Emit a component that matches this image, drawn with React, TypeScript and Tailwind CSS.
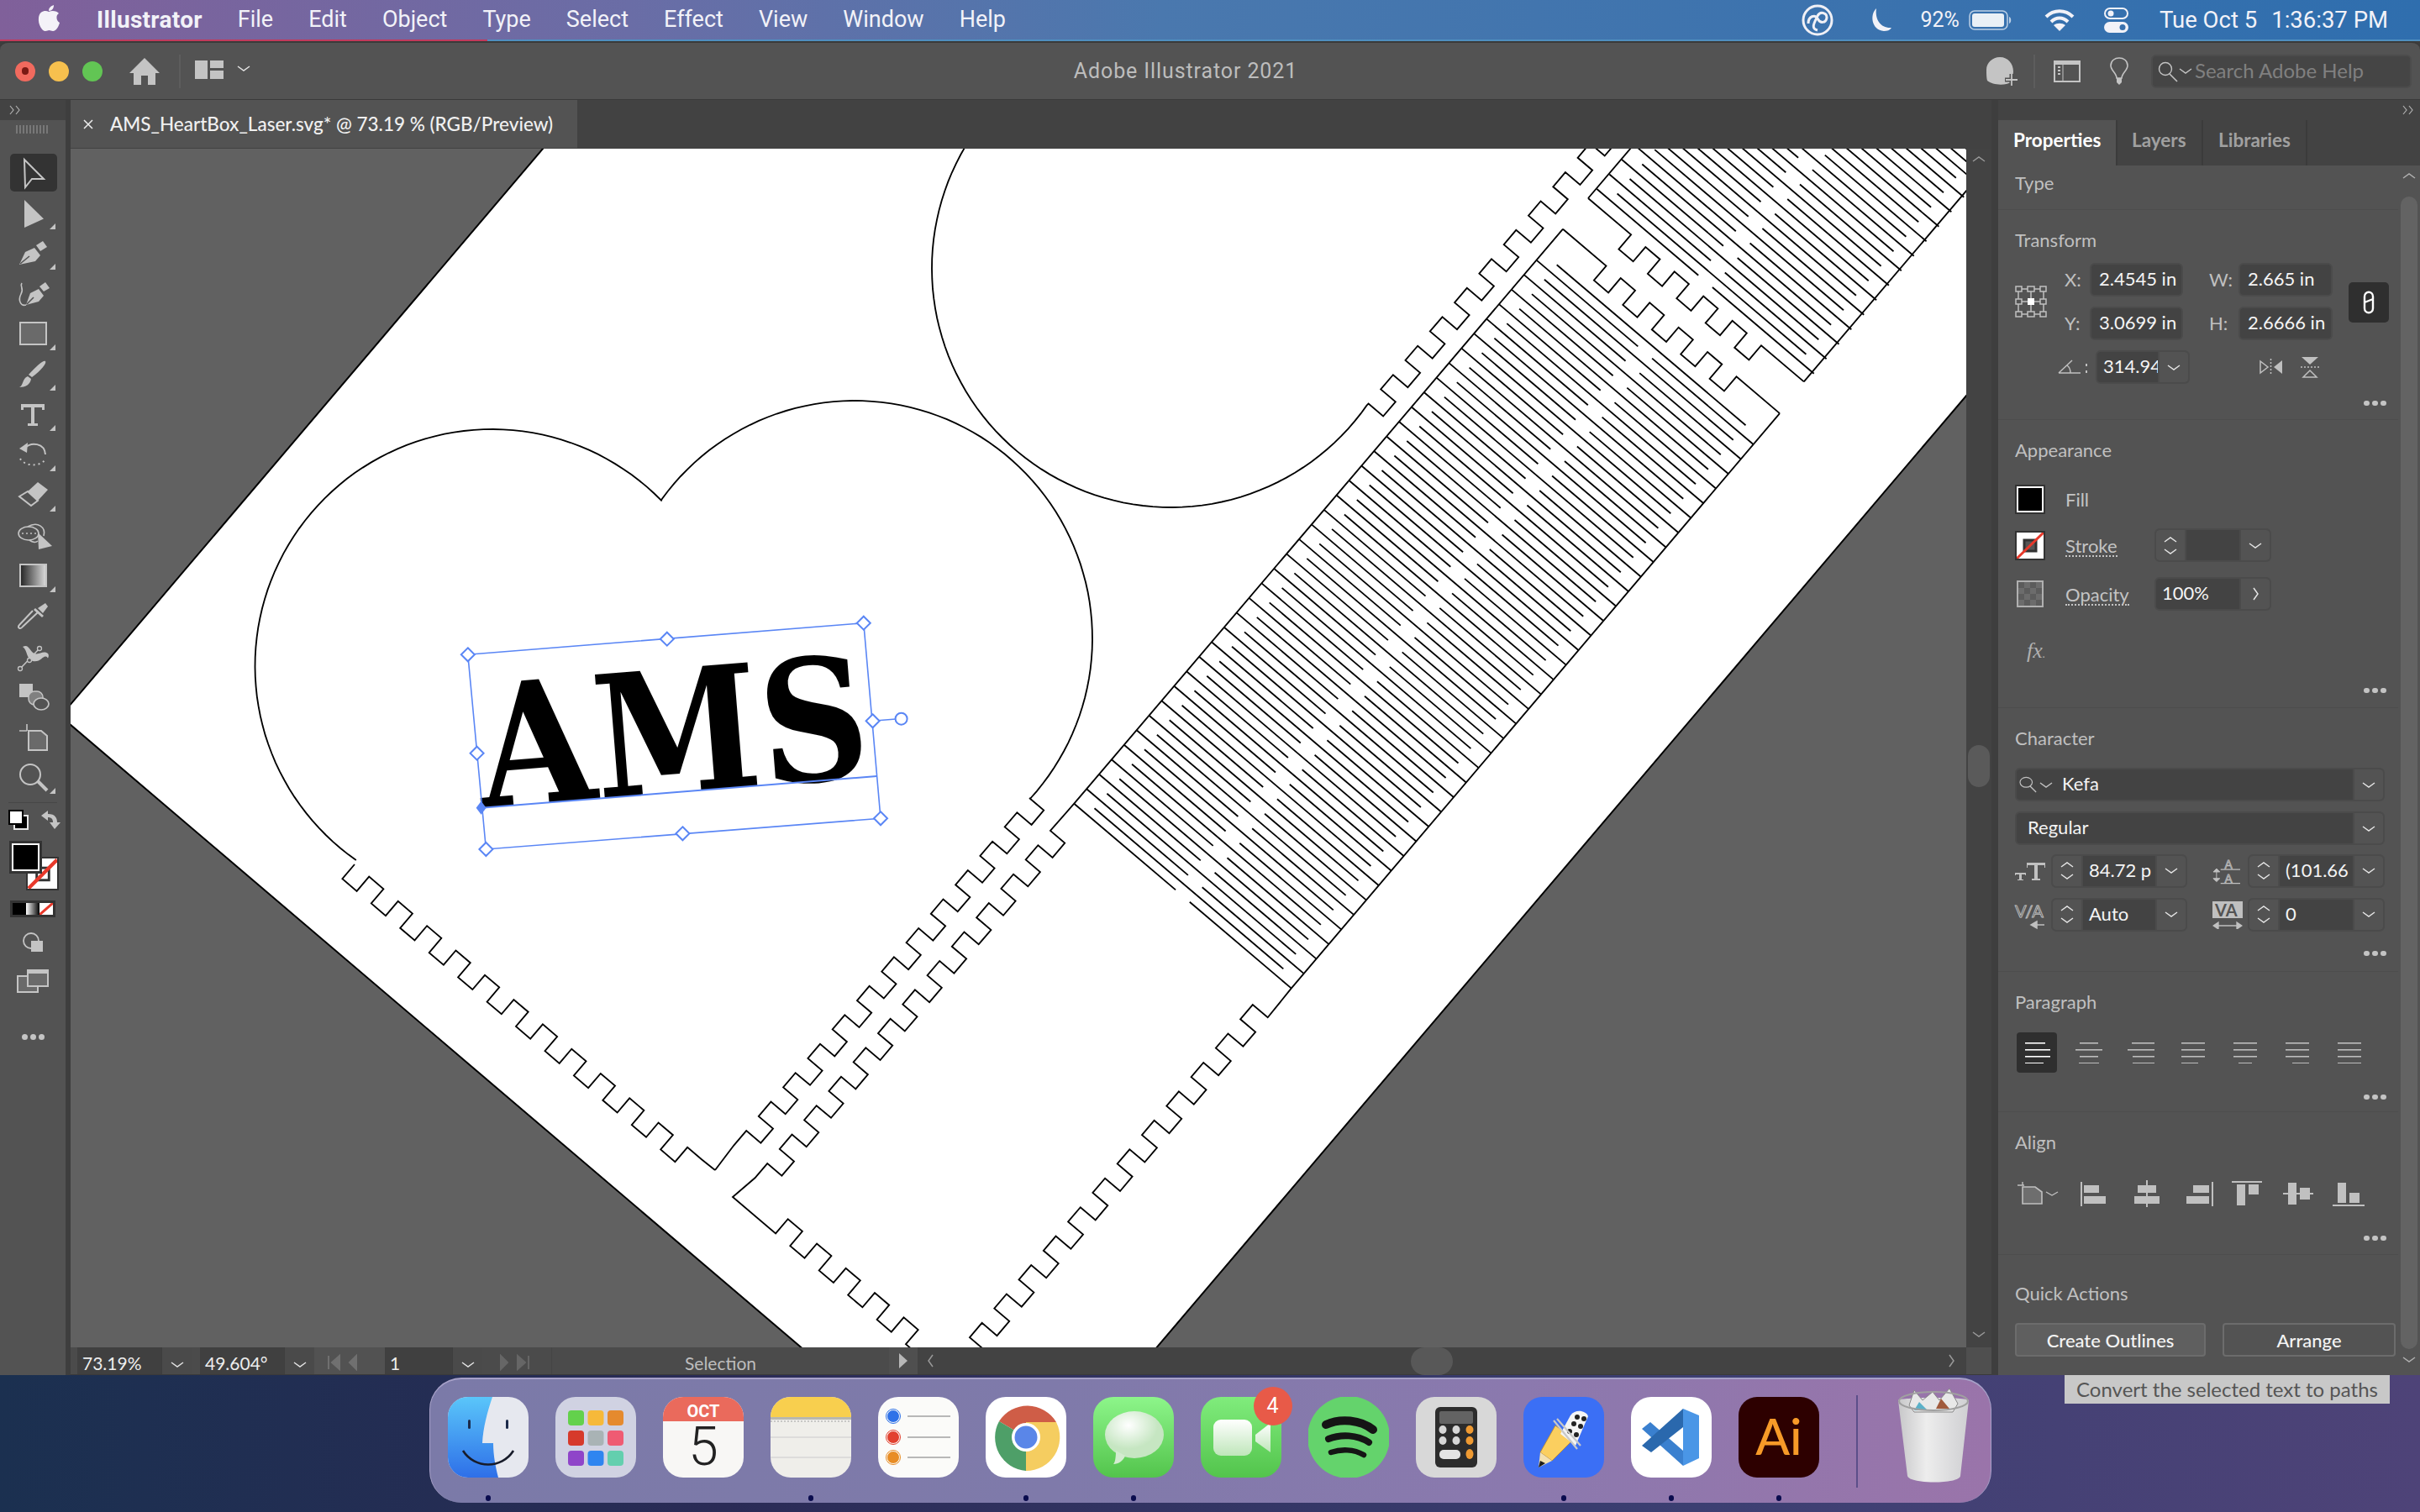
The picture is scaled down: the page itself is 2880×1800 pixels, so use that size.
import React from 'react';

type Pt = [number, number];

const U: Pt = [0.648, -0.762];
const V: Pt = [0.762, 0.648];
const T = 22.6;
const ICON = '#c4c4c4';

const add = (p: Pt, d: Pt, n: number): Pt => [p[0] + d[0] * n, p[1] + d[1] * n];

// walks a start point through [direction, length] moves
function walk(start: Pt, moves: [Pt, number][]): Pt[] {
  const pts: Pt[] = [start];
  moves.forEach(([d, n]) => pts.push(add(pts[pts.length - 1], d, n)));
  return pts;
}

function arc(c: Pt, r: number, from: number, to: number): Pt[] {
  const pts: Pt[] = [];
  const n = 80;
  for (let i = 0; i <= n; i++) {
    const a = ((from + ((to - from) * i) / n) * Math.PI) / 180;
    pts.push([c[0] + Math.cos(a) * r, c[1] + Math.sin(a) * r]);
  }
  return pts;
}

const rep = (n: number, m: [Pt, number][]) => Array.from({ length: n }).flatMap(() => m);
const neg = (d: Pt): Pt => [-d[0], -d[1]];
const str = (pts: Pt[]) => pts.map(p => `${p[0].toFixed(1)},${p[1].toFixed(1)}`).join(' ');

function Line({ pts }: { pts: Pt[] }) {
  return <polyline points={str(pts)} fill="none" stroke="#000" strokeWidth={1.85} strokeLinejoin="miter" />;
}

// living hinge: attached lines with a middle gap, floating lines between them
function Hinge({ start, count }: { start: Pt; count: number }) {
  const len = 339;
  const out: React.ReactNode[] = [];
  for (let k = 0; k < count; k++) {
    const a = add(start, U, k * 22.95);
    const f = add(add(a, U, 11.47), V, 22);
    out.push(<Line key={`a${k}`} pts={[a, add(a, V, len / 2 - 11)]} />);
    out.push(<Line key={`b${k}`} pts={[add(a, V, len / 2 + 11), add(a, V, len)]} />);
    out.push(<Line key={`f${k}`} pts={[f, add(f, V, len - 44)]} />);
  }
  return <>{out}</>;
}

function Handle({ x, y }: { x: number; y: number }) {
  return (
    <polygon
      points={`${x},${y - 8} ${x + 8},${y} ${x},${y + 8} ${x - 8},${y}`}
      fill="#fff"
      stroke="#5a86f5"
      strokeWidth={2}
    />
  );
}

function Artwork() {
  const heartL = arc([585.5, 793], 282, 125, 315.6);
  const heartR = arc([1017, 760], 283, 216, 402.3);
  const tip: Pt = [851, 1393];
  const heartLeftTeeth = [...walk([422, 1029], rep(12, [[neg(U), T], [V, T], [U, T], [V, T]])), tip];
  const heartRightTeeth = walk([1225, 950], rep(12, [[V, T], [neg(U), T], [neg(V), T], [neg(U), T]]));

  const stripA = [
    ...arc([1393.5, 319.5], 284.5, 225, 35),
    ...walk([1628.6, 480.6], rep(10, [[V, 23], [U, T], [neg(V), 23], [U, T]])),
  ];

  // main box of the lid, bottom corner to top corner and back down the long side
  const boxLeftTeeth = walk([1250, 989], rep(12, [[V, T], [neg(U), T], [neg(V), T], [neg(U), T]]));
  const corner: Pt = [872, 1425];
  const boxNear = walk(add(corner, V, 67), rep(5, [[U, T], [V, T], [neg(U), T], [V, T]]));
  const boxTop = walk([1860, 272.7], [
    [V, 67.6],
    ...rep(4, [[neg(U), T], [V, T], [U, T], [V, T]]),
    [neg(U), T],
    [V, T],
    [U, T],
    [V, 67.6],
  ]);
  const boxRight = walk(boxTop[boxTop.length - 1], [[neg(U), 897 - 0]]);
  const boxRightTeeth = walk([1508.7, 1211.3], rep(12, [[neg(V), 23.5], [neg(U), T], [V, 23.5], [neg(U), T]]));

  const upper = walk([1890, 236], [
    [V, 67],
    ...rep(4, [[neg(U), T], [V, T], [U, T], [V, T]]),
    [neg(U), T],
    [V, T],
    [U, T],
    [V, 66.6],
  ]);

  return (
    <svg viewBox="84 177 2256 1427" className="block w-full h-full">
      <polygon
        points="72,852.6 720,90 2500,90 2500,283 1295,1700 1066,1700"
        fill="#fff"
        stroke="#000"
        strokeWidth={2}
      />
      <Line pts={stripA} />
      <Line pts={[...heartL, ...heartR]} />
      <Line pts={heartLeftTeeth} />
      <Line pts={[tip, ...heartRightTeeth.slice().reverse()]} />
      <Line pts={[[1860, 272.7], [1278.3, 956.7], ...boxLeftTeeth, corner, add(corner, V, 67), ...boxNear]} />
      <Line pts={boxTop} />
      <Line pts={[boxRight[0], [1536.7, 1176.7], [1508.7, 1211.3], ...boxRightTeeth]} />
      <Hinge start={[1278.3, 956.7]} count={38} />
      <Line pts={[add([1890, 236], U, 120), [1890, 236]]} />
      <Line pts={upper} />
      <Line pts={[upper[upper.length - 1], add(upper[upper.length - 1], U, 500)]} />
      <Hinge start={[1900.4, 225]} count={20} />

      <text
        transform="translate(574 961.7) rotate(-4.6)"
        className="font-['DejaVu_Serif',serif] font-bold"
        fontSize={202}
        textLength={466}
        lengthAdjust="spacingAndGlyphs"
        fill="#000"
      >
        AMS
      </text>
      <polygon
        points="556.8,779.3 1027.8,741.7 1048,974.3 578.4,1011"
        fill="none"
        stroke="#5a86f5"
        strokeWidth={1.6}
      />
      <line x1={572.6} y1={961.7} x2={1043.6} y2={924} stroke="#5a86f5" strokeWidth={2} />
      <line x1={1038.6} y1={858.3} x2={1066} y2={856} stroke="#5a86f5" strokeWidth={1.6} />
      <circle cx={1072.6} cy={855.7} r={7} fill="#fff" stroke="#5a86f5" strokeWidth={2} />
      <Handle x={556.8} y={779.3} />
      <Handle x={793.8} y={760.7} />
      <Handle x={1027.8} y={741.7} />
      <Handle x={567.6} y={896.7} />
      <Handle x={1038.6} y={858.3} />
      <Handle x={578.4} y={1011} />
      <Handle x={812.4} y={992.3} />
      <Handle x={1048} y={974.3} />
      <polygon points="572.6,953.7 578.6,961.7 572.6,969.7 566.6,961.7" fill="#5a86f5" />
    </svg>
  );
}

function Chev({ dir = 'down', className = '', color = '#e4e4e4' }: { dir?: 'down' | 'up' | 'left' | 'right'; className?: string; color?: string }) {
  const d = { down: 'M1 1 L8 6 L15 1', up: 'M1 6 L8 1 L15 6', left: 'M6 1 L1 8 L6 15', right: 'M1 1 L6 8 L1 15' }[dir];
  const vert = dir === 'down' || dir === 'up';
  return (
    <svg viewBox={vert ? '0 0 16 7' : '0 0 7 16'} className={`shrink-0 ${vert ? 'w-[16px] h-[7px]' : 'w-[7px] h-[16px]'} ${className}`}>
      <path d={d} fill="none" stroke={color} strokeWidth={1.5} />
    </svg>
  );
}

function DoubleChev({ className = '' }: { className?: string }) {
  return (
    <svg viewBox="0 0 16 12" className={`w-[16px] h-[12px] ${className}`}>
      <path d="M2 1 L6 6 L2 11 M9 1 L13 6 L9 11" fill="none" stroke="#b0b0b0" strokeWidth={1.2} />
    </svg>
  );
}

function MenuBar() {
  const items = ['File', 'Edit', 'Object', 'Type', 'Select', 'Effect', 'View', 'Window', 'Help'];
  return (
    <div className="flex items-center h-[47px] pl-[44px] pr-[38px] bg-[linear-gradient(90deg,#80609a,#6a6da6_26%,#4a78ae_48%,#2f6eae_100%)] text-[#f2f2f8] font-['Roboto',sans-serif] text-[27px]">
      <svg viewBox="0 0 28 32" className="w-[28px] h-[32px] mb-[3px]">
        <path
          d="M14 8 C10 6 3 7 2 15 C1 23 6 31 10 31 C12 31 13 30 14.5 30 C16 30 17 31 19 31 C23 31 26 25 27 21 C23 19 22 12 26 10 C24 7 18 6 14 8 Z M14 7 C14 3 17 1 20 0 C20 4 18 7 14 7 Z"
          fill="#f4f2f8"
        />
      </svg>
      <span className="ml-[43px] font-bold text-[28px] tracking-[0.3px]">Illustrator</span>
      <div className="flex ml-[42px] gap-[42px]">
        {items.map(m => (
          <span key={m}>{m}</span>
        ))}
      </div>
      <div className="ml-auto flex items-center">
        <svg viewBox="0 0 40 40" className="w-[40px] h-[40px]">
          <circle cx="20" cy="20" r="17" fill="none" stroke="#f0f0f6" strokeWidth="3" />
          <path d="M9 24 C9 15 17 13 20 18 C23 24 30 24 31 17 C31 11 23 9 20 15 C17 22 11 30 20 32" fill="none" stroke="#f0f0f6" strokeWidth="3" />
        </svg>
        <svg viewBox="0 0 28 30" className="ml-[41px] w-[28px] h-[30px]">
          <path d="M9 1 C1 8 3 27 18 28 C22 28 25 27 27 24 C15 25 7 15 9 1 Z" fill="#f2f2f8" />
        </svg>
        <span className="ml-[34px] text-[25px]">92%</span>
        <svg viewBox="0 0 52 24" className="ml-[11px] w-[52px] h-[24px]">
          <rect x="1" y="1" width="45" height="22" rx="6" fill="none" stroke="#bcd0e6" strokeWidth="1.5" />
          <rect x="4" y="4" width="38" height="16" rx="3" fill="#eaf0f6" />
          <path d="M48 8 C51 9 51 15 48 16 Z" fill="#bcd0e6" />
        </svg>
        <svg viewBox="0 0 36 26" className="ml-[38px] w-[36px] h-[26px]">
          <path d="M2 9 C11 0 25 0 34 9 M8 15 C14 9 22 9 28 15" fill="none" stroke="#f2f2f8" strokeWidth="4" />
          <path d="M18 26 L11 19 C15 16 21 16 25 19 Z" fill="#f2f2f8" />
        </svg>
        <svg viewBox="0 0 30 30" className="ml-[35px] w-[30px] h-[30px]">
          <rect x="1" y="1" width="27" height="12" rx="6" fill="none" stroke="#f2f2f8" strokeWidth="2" />
          <circle cx="8" cy="7" r="3.5" fill="#f2f2f8" />
          <rect x="0" y="17" width="29" height="13" rx="6.5" fill="#f2f2f8" />
          <circle cx="22" cy="23.5" r="3.5" fill="#3a71ad" />
        </svg>
        <span className="ml-[36px] text-[27.5px]">Tue Oct 5</span>
        <span className="ml-[17px] text-[27.5px]">1:36:37 PM</span>
      </div>
    </div>
  );
}

function TitleBar() {
  return (
    <div className="relative flex items-center h-[69px] bg-[#535353] rounded-t-[10px] border-t-2 border-[#3a3a3a] pl-[18px] pr-[10px]">
      <span className="flex items-center justify-center w-[24px] h-[24px] rounded-full bg-[#f16a5e]">
        <span className="w-[8px] h-[9px] rounded-full bg-[#7a1a14]" />
      </span>
      <span className="ml-[16px] w-[24px] h-[24px] rounded-full bg-[#f6c04e]" />
      <span className="ml-[16px] w-[24px] h-[24px] rounded-full bg-[#62c554]" />
      <svg viewBox="0 0 36 32" className="ml-[32px] w-[36px] h-[32px]">
        <path d="M18 0 L36 18 L31 18 V32 H22 V21 H14 V32 H5 V18 H0 Z" fill={ICON} />
      </svg>
      <span className="ml-[23px] w-[2px] h-[40px] bg-[#5d5d5d]" />
      <svg viewBox="0 0 34 22" className="ml-[17px] w-[34px] h-[22px] mb-[4px]">
        <path d="M0 0 H15 V22 H0 Z M18 0 H34 V9 H18 Z M18 12 H34 V22 H18 Z" fill={ICON} />
      </svg>
      <Chev className="ml-[16px] mb-[6px]" />
      <span className="absolute left-0 right-[58px] text-center text-[#bdbdbd] text-[25px] tracking-[0.9px] font-['Roboto',sans-serif] pointer-events-none">Adobe Illustrator 2021</span>
      <div className="ml-auto flex items-center">
        <svg viewBox="0 0 38 34" className="w-[38px] h-[34px]">
          <path d="M16 0 C26 0 32 8 32 17 C32 23 29 25 26 26 L31 29 C24 34 8 34 1 28 C0 25 0 20 0 15 C0 7 7 0 16 0 Z" fill={ICON} />
          <path d="M22 27 H37 M30 20 V34" stroke="#535353" strokeWidth="5" />
          <path d="M23 27 H37 M30 20 V34" stroke={ICON} strokeWidth="1.8" />
        </svg>
        <span className="ml-[18px] w-[2px] h-[40px] bg-[#5d5d5d]" />
        <svg viewBox="0 0 32 26" className="ml-[22px] w-[32px] h-[26px]">
          <rect x="1" y="1" width="30" height="24" fill="none" stroke={ICON} strokeWidth="2" />
          <rect x="1" y="1" width="30" height="4" fill={ICON} />
          <path d="M5 8 H8 M5 12 H8 M5 16 H8" stroke={ICON} strokeWidth="2" />
          <path d="M11 5 V25" stroke={ICON} strokeWidth="1" />
        </svg>
        <svg viewBox="0 0 22 34" className="ml-[35px] w-[22px] h-[34px]">
          <path d="M8 25 C8 19 1 16 1 10 C1 4 6 1 11 1 C16 1 21 4 21 10 C21 16 14 19 14 25 Z" fill="none" stroke={ICON} strokeWidth="1.6" />
          <path d="M8 25 H14 V30 L11 33 L8 30 Z" fill={ICON} />
        </svg>
        <div className="ml-[27px] flex items-center w-[310px] h-[40px] bg-[#454545] border-2 border-[#4c4c4c] rounded-[6px] pl-[6px]">
          <svg viewBox="0 0 24 26" className="w-[24px] h-[26px]">
            <circle cx="9" cy="10" r="7.5" fill="none" stroke={ICON} strokeWidth="1.4" />
            <path d="M14 16 L23 25" stroke={ICON} strokeWidth="1.6" />
          </svg>
          <Chev className="ml-[1px] w-[14px]" color={ICON} />
          <span className="ml-[3px] text-[#808080] text-[24px] leading-[30px] mb-[2px]">Search Adobe Help</span>
        </div>
      </div>
    </div>
  );
}

function Corner() {
  return <span className="absolute right-[12px] bottom-[5px] w-[7px] h-[7px] bg-[#c4c4c4] [clip-path:polygon(100%_0,100%_100%,0_100%)]" />;
}

const toolIcons: { el: React.ReactNode; corner: boolean }[] = [
  { corner: false, el: <path d="M8 2 L31 25 H17 L9 35 Z" fill="none" stroke={ICON} strokeWidth="2" /> },
  { corner: true, el: <path d="M8 2 L31 24.5 L8 35 Z" fill={ICON} /> },
  {
    corner: true,
    el: (
      <>
        <path d="M2 31 L9 16 L20 11 L27 20 L21 27 Z" fill={ICON} />
        <path d="M22 8 L30 3 L35 10 L27 15 Z" fill={ICON} />
        <path d="M3 30 L14 21" stroke="#535353" strokeWidth="1.6" />
      </>
    ),
  },
  {
    corner: false,
    el: (
      <>
        <path d="M10 31 L15 17 L25 12 L31 20 L25 27 Z" fill={ICON} />
        <path d="M26 9 L33 4 L38 11 L31 15 Z" fill={ICON} />
        <path d="M11 30 L19 22" stroke="#535353" strokeWidth="1.6" />
        <path d="M5 5 C2 9 8 11 4 18 C0 26 4 33 10 31" fill="none" stroke={ICON} strokeWidth="1.6" />
      </>
    ),
  },
  { corner: true, el: <rect x="3" y="4" width="31" height="26" fill="#6a6a6a" stroke={ICON} strokeWidth="2" /> },
  {
    corner: true,
    el: (
      <>
        <path d="M33 2 C35 4 28 13 17 21 L13 18 C22 8 31 0 33 2 Z" fill={ICON} />
        <path d="M2 33 C7 31 5 23 12 20 L16 23 C15 30 9 33 2 33 Z" fill={ICON} />
      </>
    ),
  },
  {
    corner: true,
    el: (
      <>
        <rect x="4" y="5" width="28" height="4" fill={ICON} />
        <rect x="4" y="5" width="3" height="7" fill={ICON} />
        <rect x="29" y="5" width="3" height="7" fill={ICON} />
        <rect x="16" y="5" width="4" height="24" fill={ICON} />
        <rect x="12" y="28" width="12" height="3" fill={ICON} />
      </>
    ),
  },
  {
    corner: true,
    el: (
      <>
        <path d="M9 9 C16 2 32 3 33 17" fill="none" stroke={ICON} strokeWidth="2" />
        <path d="M2 10 L12 3 L11 15 Z" fill={ICON} />
        <path d="M3 22 C8 31 26 32 32 24" fill="none" stroke={ICON} strokeWidth="2" strokeDasharray="2 4" />
      </>
    ),
  },
  {
    corner: true,
    el: (
      <>
        <path d="M12 13 L24 2 L36 11 L24 24 Z" fill={ICON} />
        <path d="M2 19 L12 13 L24 24 L16 30 Z" fill="none" stroke={ICON} strokeWidth="2" />
      </>
    ),
  },
  {
    corner: false,
    el: (
      <>
        <ellipse cx="13" cy="15" rx="12" ry="8" fill="none" stroke={ICON} strokeWidth="1.6" />
        <path d="M12 7 C24 0 34 8 31 18" fill="none" stroke={ICON} strokeWidth="1.6" />
        <path d="M14 23 C18 26 22 26 24 24" fill="none" stroke={ICON} strokeWidth="1.6" />
        <path d="M5 15 H22" stroke={ICON} strokeWidth="1.6" strokeDasharray="2 3" />
        <path d="M24 14 L41 30 L25 34 Z" fill={ICON} />
      </>
    ),
  },
  {
    corner: true,
    el: (
      <>
        <defs>
          <linearGradient id="toolGrad">
            <stop offset="0" stopColor="#222" />
            <stop offset="1" stopColor="#ddd" />
          </linearGradient>
        </defs>
        <rect x="3" y="4" width="31" height="26" fill="url(#toolGrad)" stroke={ICON} strokeWidth="2" />
      </>
    ),
  },
  {
    corner: false,
    el: (
      <>
        <path d="M24 8 L33 2 L36 6 L30 14 Z" fill={ICON} />
        <path d="M20 9 L30 18" stroke={ICON} strokeWidth="3" />
        <path d="M24 13 L6 30 C3 34 -1 31 2 28 L18 11" fill="none" stroke={ICON} strokeWidth="2" />
      </>
    ),
  },
  {
    corner: false,
    el: (
      <>
        <path d="M6 6 C14 2 14 12 20 14 C26 16 30 10 36 14 C38 16 36 22 35 18 C30 15 28 25 18 23 C10 21 12 10 6 6 Z" fill={ICON} />
        <path d="M3 32 L26 8" stroke={ICON} strokeWidth="1.6" />
        <circle cx="3" cy="32" r="2.5" fill="#535353" stroke={ICON} strokeWidth="1.3" />
        <circle cx="14" cy="22" r="2.5" fill="#535353" stroke={ICON} strokeWidth="1.3" />
        <circle cx="26" cy="8" r="2.5" fill="#535353" stroke={ICON} strokeWidth="1.3" />
      </>
    ),
  },
  {
    corner: false,
    el: (
      <>
        <rect x="2" y="2" width="16" height="16" fill={ICON} />
        <rect x="13" y="11" width="17" height="16" rx="7" fill="#808080" stroke={ICON} strokeWidth="1.5" />
        <ellipse cx="28" cy="26" rx="9" ry="7" fill="#535353" stroke={ICON} strokeWidth="1.7" />
      </>
    ),
  },
  {
    corner: false,
    el: (
      <>
        <path d="M2 10 H11 M11 2 V10" stroke={ICON} strokeWidth="1.6" />
        <path d="M13 10 H28 L35 16 V33 H13 Z" fill="#6a6a6a" stroke={ICON} strokeWidth="2" />
      </>
    ),
  },
  {
    corner: true,
    el: (
      <>
        <circle cx="15" cy="14" r="12" fill="none" stroke={ICON} strokeWidth="2" />
        <path d="M24 22 L35 33" stroke={ICON} strokeWidth="4" />
      </>
    ),
  },
];

function Toolbar() {
  return (
    <div className="flex flex-col w-[78px] bg-[#535353] shrink-0">
      <div className="flex items-center h-[24px] bg-[#434343] pl-[10px]">
        <DoubleChev />
      </div>
      <div className="flex items-center justify-center h-[22px]">
        <svg viewBox="0 0 40 10" className="w-[40px] h-[10px]">
          <path d="M1 0 V10 M5 0 V10 M9 0 V10 M13 0 V10 M17 0 V10 M21 0 V10 M25 0 V10 M29 0 V10 M33 0 V10 M37 0 V10" stroke="#888" strokeWidth="1.4" />
        </svg>
      </div>
      <div className="flex flex-col pt-[17px]">
        {toolIcons.map((t, i) => (
          <div key={i} className="relative flex items-center justify-center h-[48px]">
            {i === 0 && <span className="absolute left-[12px] right-[10px] top-[1px] h-[45px] bg-[#333] rounded-[5px]" />}
            <svg viewBox="0 0 36 36" className="relative w-[36px] h-[36px] overflow-visible">
              {t.el}
            </svg>
            {t.corner && <Corner />}
          </div>
        ))}
      </div>
      <div className="mx-[10px] mt-[5px] h-[1px] bg-[#474747]" />
      <div className="flex items-center justify-between h-[24px] mt-[8px] pl-[10px] pr-[6px]">
        <svg viewBox="0 0 24 24" className="w-[24px] h-[24px]">
          <rect x="7" y="7" width="16" height="16" fill="#000" stroke="#e8e8e8" strokeWidth="2" />
          <rect x="1" y="1" width="16" height="16" fill="#fff" stroke="#000" strokeWidth="2" />
        </svg>
        <svg viewBox="0 0 24 24" className="w-[24px] h-[24px]">
          <path d="M1 7 L9 1 V5 C18 5 20 10 20 15 H24 L17 23 L11 15 H15 C15 11 13 9 9 9 V13 Z" fill={ICON} />
        </svg>
      </div>
      <div className="relative h-[58px] mt-[13px]">
        <span className="absolute left-[31px] top-[19px] w-[39px] h-[40px] border-2 border-[#333] bg-white">
          <svg viewBox="0 0 36 36" className="w-full h-full">
            <rect x="11" y="11" width="15" height="15" fill="none" stroke="#333" strokeWidth="3" />
            <path d="M1 36 L36 1" stroke="#e8392b" strokeWidth="4.5" />
          </svg>
        </span>
        <span className="absolute left-[11px] top-0 w-[39px] h-[39px] border-[3px] border-[#333] bg-white p-[2px]">
          <span className="block w-full h-full bg-black" />
        </span>
      </div>
      <div className="flex mx-[12px] mt-[13px] h-[20px] border-[3px] border-[#333]">
        <span className="flex-1 bg-black" />
        <span className="flex-1 bg-[linear-gradient(90deg,#fff,#000)]" />
        <span className="flex-1 bg-white relative overflow-hidden">
          <svg viewBox="0 0 16 14" className="absolute inset-0 w-full h-full">
            <path d="M0 14 L16 0" stroke="#e8392b" strokeWidth="3" />
          </svg>
        </span>
      </div>
      <div className="flex justify-center mt-[18px] h-[24px]">
        <svg viewBox="0 0 24 24" className="w-[24px] h-[24px]">
          <circle cx="10" cy="10" r="9" fill="none" stroke={ICON} strokeWidth="1.8" />
          <rect x="10" y="10" width="14" height="13" fill={ICON} />
        </svg>
      </div>
      <div className="flex justify-center mt-[20px] h-[28px]">
        <svg viewBox="0 0 38 28" className="w-[38px] h-[28px]">
          <rect x="1" y="8" width="24" height="19" fill="#6a6a6a" stroke={ICON} strokeWidth="2" />
          <rect x="13" y="1" width="24" height="19" fill="#6a6a6a" stroke={ICON} strokeWidth="2" />
          <rect x="13" y="1" width="24" height="4" fill={ICON} />
        </svg>
      </div>
      <div className="flex justify-center gap-[3px] mt-[49px]">
        <span className="w-[7px] h-[7px] rounded-full bg-[#c4c4c4]" />
        <span className="w-[7px] h-[7px] rounded-full bg-[#c4c4c4]" />
        <span className="w-[7px] h-[7px] rounded-full bg-[#c4c4c4]" />
      </div>
    </div>
  );
}

function StatusChev() {
  return (
    <span className="flex items-center justify-center w-[36px] h-full pt-[8px] bg-[#4a4a4a] border-l border-[#3e3e3e]">
      <Chev className="w-[13px]" />
    </span>
  );
}

function StatusBar() {
  return (
    <div className="flex h-[33px] bg-[#4b4b4b] text-[21px] text-[#ededed] border-b border-[#3a3a3a]">
      <div className="w-[8px]" />
      <span className="flex items-center w-[100px] pl-[6px] pt-[5px] bg-[#404040]">73.19%</span>
      <StatusChev />
      <div className="w-[10px]" />
      <span className="flex items-center w-[100px] pl-[6px] pt-[5px] bg-[#404040]">49.604°</span>
      <StatusChev />
      <div className="flex items-center gap-[14px] w-[84px] pl-[16px] pt-[3px] bg-[#525252]">
        <svg viewBox="0 0 36 20" className="w-[36px] h-[20px]">
          <path d="M1 2 V18 M14 2 L5 10 L14 18 Z M34 2 L26 10 L34 18 Z" fill="#707070" stroke="#707070" strokeWidth="2" />
        </svg>
      </div>
      <span className="flex items-center w-[80px] pl-[6px] pt-[5px] bg-[#404040]">1</span>
      <StatusChev />
      <div className="flex items-center w-[82px] pl-[20px] pt-[3px] bg-[#4b4b4b]">
        <svg viewBox="0 0 36 20" className="w-[36px] h-[20px]">
          <path d="M2 2 L10 10 L2 18 Z M22 2 L31 10 L22 18 Z M35 2 V18" fill="#666" stroke="#666" strokeWidth="2" />
        </svg>
      </div>
      <span className="flex items-center justify-center w-[402px] pt-[5px] text-[#bdbdbd] border-l border-[#454545]">Selection</span>
      <span className="flex items-center justify-center w-[34px] bg-[#4f4f4f]">
        <svg viewBox="0 0 10 18" className="w-[10px] h-[18px]">
          <path d="M0 0 L10 9 L0 18 Z" fill="#b8b8b8" />
        </svg>
      </span>
      <div className="flex items-center flex-1 bg-[#434343]">
        <Chev dir="left" className="ml-[12px]" color="#999" />
        <span className="ml-[568px] w-[50px] h-[33px] rounded-full bg-[#585858]" />
        <Chev dir="right" className="ml-auto mr-[14px]" color="#999" />
      </div>
      <span className="w-[30px] bg-[#4f4f4f]" />
    </div>
  );
}

function Canvas() {
  return (
    <div className="flex flex-col flex-1 min-w-0">
      <div className="flex h-[58px] bg-[#424242]">
        <div className="flex items-center w-[603px] h-[57px] bg-[#535353] pl-[15px] text-[#f0f0f0] text-[22.5px]">
          <svg viewBox="0 0 12 12" className="w-[12px] h-[12px]">
            <path d="M1 1 L11 11 M11 1 L1 11" stroke="#eee" strokeWidth="1.5" />
          </svg>
          <span className="ml-[20px] font-medium">AMS_HeartBox_Laser.svg* @ 73.19 % (RGB/Preview)</span>
        </div>
      </div>
      <div className="flex h-[1427px]">
        <div className="w-[2256px] bg-[#616161]">
          <Artwork />
        </div>
        <div className="flex flex-col items-center w-[30px] bg-[#434343] pt-[9px]">
          <Chev dir="up" color="#999" />
          <span className="mt-[694px] w-[26px] h-[50px] rounded-full bg-[#5a5a5a]" />
          <Chev className="mt-[648px]" color="#999" />
        </div>
      </div>
      <StatusBar />
    </div>
  );
}

function Dots({ className = '' }: { className?: string }) {
  return (
    <div className={`flex justify-end gap-[3px] pr-[14px] ${className}`}>
      <span className="w-[7px] h-[6px] rounded-full bg-[#c4c4c4]" />
      <span className="w-[7px] h-[6px] rounded-full bg-[#c4c4c4]" />
      <span className="w-[7px] h-[6px] rounded-full bg-[#c4c4c4]" />
    </div>
  );
}

function Title({ children, pt = 'pt-[22px]' }: { children: React.ReactNode; pt?: string }) {
  return <div className={`pl-[20px] ${pt} h-[50px] leading-[28px] text-[22px] text-[#c0c0c0]`}>{children}</div>;
}

const boxCls = 'h-[40px] border-2 border-[#4b4b4b] rounded-[6px] bg-[#434343] text-[#f4f4f4] text-[22px] leading-[33px]';

function TextBox({ w, children, pad = 'pl-[9px]' }: { w: string; children: React.ReactNode; pad?: string }) {
  return <div className={`${w} ${pad} ${boxCls} overflow-hidden whitespace-nowrap`}>{children}</div>;
}

function Stepper({ w = 'w-[36px]' }: { w?: string }) {
  return (
    <span className={`flex flex-col items-center justify-center gap-[7px] h-full ${w} bg-[#535353] border-r-2 border-[#4b4b4b] shrink-0`}>
      <Chev dir="up" className="w-[14px]" />
      <Chev className="w-[14px]" />
    </span>
  );
}

function SelectEnd({ w = 'w-[36px]' }: { w?: string }) {
  return (
    <span className={`flex items-center justify-center h-full ${w} bg-[#535353] border-l-2 border-[#4b4b4b] shrink-0`}>
      <Chev />
    </span>
  );
}

function ComboBox({ w, children, left = true }: { w: string; children?: React.ReactNode; left?: boolean }) {
  return (
    <div className={`flex ${w} ${boxCls} overflow-hidden`}>
      {left && <Stepper />}
      <span className="flex-1 pl-[7px] overflow-hidden whitespace-nowrap">{children}</span>
      <SelectEnd />
    </div>
  );
}

function Label({ w, children }: { w: string; children: React.ReactNode }) {
  return <span className={`${w} text-[22px] leading-[40px] text-[#c0c0c0]`}>{children}</span>;
}

function AppearanceRow({ swatch, label, dotted, children, cls }: { swatch: React.ReactNode; label: string; dotted?: boolean; children?: React.ReactNode; cls: string }) {
  return (
    <div className={`flex items-center h-[40px] pl-[20px] ${cls}`}>
      <span className="flex w-[60px]">{swatch}</span>
      <span className="w-[106px] text-[22px] text-[#c4c4c4]">
        <span className={dotted ? 'border-b-2 border-dotted border-[#c4c4c4] leading-[22px] inline-block' : ''}>{label}</span>
      </span>
      {children}
    </div>
  );
}

function ParaIcon({ kind }: { kind: number }) {
  // x1/x2 per line for each alignment
  const sets: [number, number][][] = [
    [[2, 26], [2, 32], [2, 32], [2, 24]],
    [[5, 27], [0, 32], [5, 27], [4, 28]],
    [[5, 32], [0, 32], [6, 32], [6, 32]],
    [[2, 30], [2, 30], [2, 30], [2, 22]],
    [[2, 30], [2, 30], [2, 30], [8, 24]],
    [[2, 30], [2, 30], [2, 30], [10, 30]],
    [[2, 30], [2, 30], [2, 30], [2, 30]],
  ];
  const color = kind === 0 ? '#fff' : '#bdbdbd';
  return (
    <svg viewBox="0 0 32 26" className="w-[32px] h-[26px]">
      {sets[kind].map(([a, b], i) => (
        <rect key={i} x={a} y={1 + i * 8} width={b - a} height="1.6" fill={color} />
      ))}
    </svg>
  );
}

function AlignIcon({ d }: { d: string }) {
  return (
    <svg viewBox="0 0 38 32" className="w-[38px] h-[32px]">
      <path d={d} fill="#c0c0c0" />
    </svg>
  );
}

function PropertiesPanel() {
  return (
    <div className="relative flex flex-col flex-1 min-w-0 bg-[#535353]">
      <div className="flex items-center justify-end h-[24px] bg-[#434343] pr-[6px]">
        <DoubleChev />
      </div>
      <div className="flex h-[54px] bg-[#434343] text-[22.5px] leading-[48px] font-bold">
        <span className="w-[140px] pl-[18px] bg-[#535353] text-white">Properties</span>
        <span className="w-[102px] pl-[17px] border-l-2 border-[#3b3b3b] text-[#a0a0a0]">Layers</span>
        <span className="w-[126px] pl-[18px] border-x-2 border-[#3b3b3b] text-[#a0a0a0]">Libraries</span>
      </div>
      <div className="flex flex-1">
        <div className="flex flex-col w-[476px] shrink-0">
          <section className="h-[53px] border-b border-[#4d4d4d]">
            <Title pt="pt-[7px]">Type</Title>
          </section>

          <section className="h-[250px] border-b border-[#4d4d4d]">
            <Title>Transform</Title>
            <div className="flex pl-[20px] mt-[13px]">
              <svg viewBox="0 0 38 38" className="w-[38px] h-[38px] mt-[27px] shrink-0">
                <g fill="none" stroke="#c0c0c0" strokeWidth="1.5">
                  <path d="M8 4 H15 M23 4 H30 M8 19 H15 M23 19 H30 M8 34 H15 M23 34 H30 M4 7 V16 M19 7 V15 M34 7 V16 M4 22 V31 M19 23 V31 M34 22 V31" />
                  <rect x="1" y="1" width="7" height="6" />
                  <rect x="15" y="1" width="8" height="6" />
                  <rect x="30" y="1" width="7" height="6" />
                  <rect x="1" y="16" width="7" height="6" />
                  <rect x="30" y="16" width="7" height="6" />
                  <rect x="1" y="31" width="7" height="6" />
                  <rect x="15" y="31" width="8" height="6" />
                  <rect x="30" y="31" width="7" height="6" />
                </g>
                <rect x="15" y="15" width="8" height="8" fill="#fff" />
              </svg>
              <div className="flex flex-col gap-[12px] ml-[21px]">
                <div className="flex">
                  <Label w="w-[30px]">X:</Label>
                  <TextBox w="w-[111px]">2.4545 in</TextBox>
                  <span className="w-[31px]" />
                  <Label w="w-[35px]">W:</Label>
                  <TextBox w="w-[112px]">2.665 in</TextBox>
                </div>
                <div className="flex">
                  <Label w="w-[30px]">Y:</Label>
                  <TextBox w="w-[111px]">3.0699 in</TextBox>
                  <span className="w-[31px]" />
                  <Label w="w-[35px]">H:</Label>
                  <TextBox w="w-[112px]">2.6666 in</TextBox>
                </div>
              </div>
              <span className="flex items-center justify-center ml-[19px] mt-[23px] w-[48px] h-[48px] rounded-[5px] bg-[#2f2f2f]">
                <svg viewBox="0 0 16 30" className="w-[16px] h-[30px]">
                  <path d="M3 19 V8 C3 1 13 1 13 8 V11 L3 15 M13 11 V22 C13 29 3 29 3 22 V19" fill="none" stroke="#fff" strokeWidth="2.4" />
                </svg>
              </span>
            </div>
            <div className="flex items-center h-[40px] mt-[12px] ml-[70px]">
              <svg viewBox="0 0 38 22" className="w-[38px] h-[22px] shrink-0">
                <path d="M2 18 L18 3 M2 18 H28" stroke="#c0c0c0" strokeWidth="1.5" fill="none" />
                <path d="M12 9 C15 11 16 14 16 18" stroke="#c0c0c0" strokeWidth="1.5" fill="none" />
                <rect x="34" y="7" width="2" height="3" fill="#c0c0c0" />
                <rect x="34" y="15" width="2" height="3" fill="#c0c0c0" />
              </svg>
              <div className={`flex ml-[8px] w-[112px] ${boxCls} overflow-hidden`}>
                <span className="w-[74px] pl-[7px] overflow-hidden whitespace-nowrap">314.94</span>
                <SelectEnd />
              </div>
              <svg viewBox="0 0 28 20" className="ml-[83px] w-[28px] h-[20px]">
                <path d="M1 3 L10 10 L1 17 Z" fill="none" stroke="#c0c0c0" strokeWidth="1.5" />
                <path d="M27 2 L17 10 L27 18 Z" fill="#c0c0c0" />
                <path d="M13.5 0 V20" stroke="#c0c0c0" strokeWidth="1.5" strokeDasharray="2 2" />
              </svg>
              <svg viewBox="0 0 22 26" className="ml-[21px] w-[22px] h-[26px]">
                <path d="M1 1 H21 L11 10 Z" fill="#c0c0c0" />
                <path d="M3 25 H19 L11 17 Z" fill="none" stroke="#c0c0c0" strokeWidth="1.5" />
                <path d="M0 13 H22" stroke="#c0c0c0" strokeWidth="1.5" strokeDasharray="2 2" />
              </svg>
            </div>
            <Dots className="mt-[20px]" />
          </section>

          <section className="h-[343px] border-b border-[#4d4d4d]">
            <Title>Appearance</Title>
            <AppearanceRow
              cls="mt-[24px]"
              label="Fill"
              swatch={
                <span className="w-[36px] h-[35px] border-2 border-[#333] bg-white p-[2px]">
                  <span className="block w-full h-full bg-black" />
                </span>
              }
            />
            <AppearanceRow
              cls="mt-[15px]"
              label="Stroke"
              dotted
              swatch={
                <span className="w-[36px] h-[35px] border-2 border-[#333] bg-white">
                  <svg viewBox="0 0 32 31" className="w-full h-full">
                    <rect x="9" y="9" width="14" height="13" fill="#555" stroke="#333" strokeWidth="3" />
                    <path d="M0 31 L32 0" stroke="#e8392b" strokeWidth="3" />
                  </svg>
                </span>
              }
            >
              <div className={`flex w-[139px] ${boxCls} overflow-hidden`}>
                <Stepper />
                <span className="flex-1" />
                <SelectEnd />
              </div>
            </AppearanceRow>
            <AppearanceRow
              cls="mt-[18px]"
              label="Opacity"
              dotted
              swatch={
                <span className="ml-[2px] w-[32px] h-[32px] border-2 border-[#b0b0b0] bg-[conic-gradient(#6c6c6c_25%,#5c5c5c_0_50%,#6c6c6c_0_75%,#5c5c5c_0)] bg-[length:14px_14px]" />
              }
            >
              <div className={`flex w-[139px] ${boxCls} overflow-hidden`}>
                <span className="flex-1 pl-[7px]">100%</span>
                <span className="flex items-center justify-center w-[36px] h-full bg-[#535353] border-l-2 border-[#4b4b4b]">
                  <Chev dir="right" />
                </span>
              </div>
            </AppearanceRow>
            <div className="pl-[34px] mt-[30px] h-[36px] leading-[36px] text-[26px] italic text-[#b0b0b0] font-['Liberation_Serif',serif]">
              fx<span className="text-[14px]">.</span>
            </div>
            <Dots className="mt-[26px]" />
          </section>

          <section className="h-[314px] border-b border-[#4d4d4d]">
            <Title>Character</Title>
            <div className="flex flex-col pl-[20px] mt-[21px]">
              <div className={`flex w-[440px] ${boxCls} overflow-hidden`}>
                <span className="flex items-center w-[54px] pl-[3px] shrink-0">
                  <svg viewBox="0 0 24 22" className="w-[22px] h-[20px] shrink-0">
                    <ellipse cx="9" cy="8" rx="8" ry="6.5" fill="none" stroke="#c0c0c0" strokeWidth="1.3" />
                    <path d="M14 13 L22 21" stroke="#c0c0c0" strokeWidth="1.5" />
                  </svg>
                  <Chev className="ml-[2px] w-[14px]" color="#c0c0c0" />
                </span>
                <span className="flex-1">Kefa</span>
                <SelectEnd />
              </div>
              <div className={`flex w-[440px] mt-[12px] ${boxCls} overflow-hidden`}>
                <span className="flex-1 pl-[13px]">Regular</span>
                <SelectEnd />
              </div>
              <div className="flex items-center mt-[10px] h-[41px]">
                <svg viewBox="0 0 36 22" className="w-[36px] h-[22px] shrink-0">
                  <path d="M0 13 H13 V16 H12 V15 H8 V21 H10 V22 H3 V21 H5 V15 H1 V16 H0 Z M14 1 H36 V7 H35 V4 H27 V20 H30 V22 H20 V20 H23 V4 H15 V7 H14 Z" fill="#c0c0c0" />
                </svg>
                <div className="ml-[7px]"><ComboBox w="w-[162px]">84.72 p</ComboBox></div>
                <svg viewBox="0 0 34 32" className="ml-[30px] w-[33px] h-[32px] shrink-0 overflow-visible">
                  <path d="M10 14 H34 M10 31 H34" stroke="#c0c0c0" strokeWidth="1.4" />
                  <text x="15" y="13" fontSize="14" fill="none" stroke="#c0c0c0" strokeWidth="0.8">A</text>
                  <text x="15" y="30" fontSize="14" fill="none" stroke="#c0c0c0" strokeWidth="0.8">A</text>
                  <path d="M5 14 V28 M1 17 L5 13 L9 17 Z M1 25 L5 29 L9 25 Z" fill="#c0c0c0" stroke="#c0c0c0" />
                </svg>
                <div className="ml-[9px]"><ComboBox w="w-[163px]">(101.66</ComboBox></div>
              </div>
              <div className="flex items-center mt-[11px] h-[41px]">
                <svg viewBox="0 0 36 34" className="w-[36px] h-[34px] shrink-0 overflow-visible">
                  <text x="0" y="20" fontSize="20" fill="none" stroke="#c0c0c0" strokeWidth="0.9">V/A</text>
                  <path d="M35 29 H20 M26 25 L19 29 L26 33 Z" stroke="#c0c0c0" strokeWidth="1.5" fill="#c0c0c0" />
                </svg>
                <div className="ml-[7px]"><ComboBox w="w-[162px]">Auto</ComboBox></div>
                <svg viewBox="0 0 36 34" className="ml-[30px] w-[36px] h-[34px] shrink-0">
                  <rect x="0" y="1" width="36" height="20" fill="#c0c0c0" />
                  <text x="3" y="19" fontSize="20" fontWeight="700" fill="#535353">VA</text>
                  <path d="M1 30 H35 M7 26 L1 30 L7 34 Z M29 26 L35 30 L29 34 Z" stroke="#c0c0c0" strokeWidth="1.3" fill="#c0c0c0" />
                </svg>
                <div className="ml-[6px]"><ComboBox w="w-[163px]">0</ComboBox></div>
              </div>
            </div>
            <Dots className="mt-[23px]" />
          </section>

          <section className="h-[167px] border-b border-[#4d4d4d]">
            <Title>Paragraph</Title>
            <div className="flex gap-[14px] pl-[22px] mt-[22px]">
              {[0, 1, 2, 3, 4, 5, 6].map(k => (
                <span key={k} className={`flex items-center justify-center w-[48px] h-[48px] rounded-[4px] ${k === 0 ? 'bg-[#2f2f2f]' : ''}`}>
                  <ParaIcon kind={k} />
                </span>
              ))}
            </div>
            <Dots className="mt-[26px]" />
          </section>

          <section className="h-[170px] border-b border-[#4d4d4d]">
            <Title>Align</Title>
            <div className="flex items-center h-[40px] pl-[22px] mt-[27px]">
              <span className="flex items-center w-[65px]">
                <svg viewBox="0 0 50 30" className="w-[50px] h-[30px] shrink-0">
                  <path d="M1 5 H9 M7 1 V5" stroke="#c0c0c0" strokeWidth="1.4" fill="none" />
                  <path d="M7 7 H22 L30 13 V27 H7 Z" fill="#6e6e6e" stroke="#c0c0c0" strokeWidth="1.6" />
                  <path d="M35 13 L42 17 L49 13" stroke="#c0c0c0" strokeWidth="1.3" fill="none" />
                </svg>
              </span>
              {[
                'M0 2 H2 V31 H0 Z M4 6 H22 V15 H4 Z M4 19 H30 V28 H4 Z',
                'M18 0 H20 V32 H18 Z M8 6 H30 V15 H8 Z M4 19 H34 V28 H4 Z',
                'M36 2 H38 V31 H36 Z M14 6 H33 V15 H14 Z M6 19 H33 V28 H6 Z',
                'M0 1 H36 V3 H0 Z M6 5 H16 V30 H6 Z M20 5 H32 V17 H20 Z',
                'M1 15 H37 V17 H1 Z M7 3 H17 V29 H7 Z M21 9 H33 V23 H21 Z',
                'M0 29 H38 V31 H0 Z M6 3 H16 V27 H6 Z M20 15 H32 V27 H20 Z',
              ].map(d => (
                <span key={d} className="flex items-center justify-center w-[60px]">
                  <AlignIcon d={d} />
                </span>
              ))}
            </div>
            <Dots className="mt-[30px]" />
          </section>

          <section className="flex-1">
            <Title pt="pt-[32px]">Quick Actions</Title>
            <div className="flex pl-[20px] mt-[31px] gap-[20px] text-[22px] text-[#f4f4f4] font-medium">
              <span className="flex items-center justify-center w-[227px] h-[40px] rounded-[4px] border-2 border-[#6c6c6c] bg-[#5f5f5f]">Create Outlines</span>
              <span className="flex items-center justify-center w-[206px] h-[40px] rounded-[4px] border-2 border-[#6c6c6c]">Arrange</span>
            </div>
          </section>
        </div>
        <div className="flex flex-col items-center flex-1 pt-[9px]">
          <Chev dir="up" color="#b0b0b0" />
          <span className="mt-[21px] w-[20px] h-[1372px] rounded-full bg-[#636363]" />
          <Chev className="mt-[9px]" color="#b0b0b0" />
        </div>
      </div>
    </div>
  );
}

function DockItem({ children, dot }: { children: React.ReactNode; dot?: boolean }) {
  return (
    <div className="flex flex-col items-center w-[96px] shrink-0">
      <div className="relative w-[96px] h-[96px]">{children}</div>
      <span className={`mt-[21px] w-[6px] h-[7px] rounded-full ${dot ? 'bg-[#0a0c4e]' : ''}`} />
    </div>
  );
}

function AppIcon({ children }: { children: React.ReactNode }) {
  return (
    <svg viewBox="0 0 96 96" className="block w-[96px] h-[96px]">
      {children}
    </svg>
  );
}

function Dock() {
  const launch = [
    ['#63d14c', '#f6b93a', '#e58a2e'],
    ['#d63a2b', '#a9b3b5', '#ef5b73'],
    ['#8f45c9', '#2f85f0', '#63cfae'],
  ];
  return (
    <div className="flex gap-[32px] w-[1859px] h-[149px] pl-[21px] pt-[21px] rounded-[38px] border-t-2 border-x border-[#a7a1c8] bg-[linear-gradient(90deg,#7b7aa8,#7f7aaa_40%,#8b79ae_70%,#9a74aa)]">
      <DockItem dot>
        <AppIcon>
          <defs>
            <linearGradient id="finderBlue" x1="0" y1="0" x2="0" y2="1">
              <stop offset="0" stopColor="#5ac6fa" />
              <stop offset="1" stopColor="#2e6fe8" />
            </linearGradient>
            <clipPath id="finderClip">
              <rect width="96" height="96" rx="24" />
            </clipPath>
          </defs>
          <g clipPath="url(#finderClip)">
            <rect width="96" height="96" fill="#e6e8ef" />
            <path d="M0 0 H53 C47 18 42 36 41 55 H54 C54 70 57 84 60 96 H0 Z" fill="url(#finderBlue)" />
          </g>
          <rect x="24" y="27" width="3" height="11" rx="1.5" fill="#1b2a4a" />
          <rect x="69" y="27" width="3" height="11" rx="1.5" fill="#1b2a4a" />
          <path d="M18 64 C32 86 64 86 78 64" fill="none" stroke="#181c2a" strokeWidth="2.6" />
        </AppIcon>
      </DockItem>
      <DockItem>
        <AppIcon>
          <rect width="96" height="96" rx="24" fill="#d0d2e2" />
          {launch.map((row, y) =>
            row.map((c, x) => <rect key={`${x}${y}`} x={15 + x * 23.5} y={16 + y * 24} width="19" height="18" rx="4" fill={c} />),
          )}
        </AppIcon>
      </DockItem>
      <DockItem>
        <AppIcon>
          <defs>
            <clipPath id="calClip">
              <rect width="96" height="96" rx="24" />
            </clipPath>
          </defs>
          <g clipPath="url(#calClip)">
            <rect width="96" height="96" fill="#f8f7f5" />
            <rect width="96" height="29" fill="#ea6a5c" />
          </g>
          <text x="48" y="24" textAnchor="middle" fontSize="20" fontWeight="700" fill="#fff" className="font-['Roboto',sans-serif]">OCT</text>
          <text x="48" y="81" textAnchor="middle" fontSize="64" fontWeight="300" fill="#222" className="font-['Roboto',sans-serif]">5</text>
        </AppIcon>
      </DockItem>
      <DockItem dot>
        <AppIcon>
          <defs>
            <clipPath id="noteClip">
              <rect width="96" height="96" rx="24" />
            </clipPath>
          </defs>
          <g clipPath="url(#noteClip)">
            <rect width="96" height="96" fill="#efeeea" />
            <rect width="96" height="24" fill="#f8cf4e" />
            <rect y="24" width="96" height="3" fill="#b8b8b0" />
            <path d="M0 29 H96" stroke="#bbb" strokeWidth="1.6" strokeDasharray="2 2" />
            <path d="M0 48 H96 M0 72 H96" stroke="#d8d6d6" strokeWidth="1.6" />
          </g>
        </AppIcon>
      </DockItem>
      <DockItem>
        <AppIcon>
          <rect width="96" height="96" rx="24" fill="#fbfbf9" />
          {[
            [23, '#2f72e8'],
            [48, '#e2412f'],
            [72, '#e88d25'],
          ].map(([y, c]) => (
            <g key={String(y)}>
              <circle cx="18" cy={y as number} r="7.5" fill={c as string} stroke="#fbfbf9" strokeWidth="1" />
              <circle cx="18" cy={y as number} r="8.5" fill="none" stroke={c as string} strokeWidth="1" />
              <rect x="35" y={(y as number) - 1} width="51" height="2" fill="#b8b8b8" />
            </g>
          ))}
        </AppIcon>
      </DockItem>
      <DockItem dot>
        <AppIcon>
          <rect width="96" height="96" rx="24" fill="#fff" />
          <path d="M48 48 L16 29 A40 40 0 0 1 84 30 L48 30 Z" fill="#cf5d47" />
          <path d="M48 48 L16 29 A40 40 0 0 0 48 88 L48 48 Z" fill="#4e9f68" />
          <path d="M48 48 L48 30 L84 30 A40 40 0 0 1 48 88 Z" fill="#f5cd60" />
          <circle cx="48" cy="48" r="17" fill="#fff" />
          <circle cx="48" cy="48" r="13.5" fill="#5a86e8" />
        </AppIcon>
      </DockItem>
      <DockItem dot>
        <AppIcon>
          <defs>
            <linearGradient id="msgGreen" x1="0" y1="0" x2="0" y2="1">
              <stop offset="0" stopColor="#8df58a" />
              <stop offset="1" stopColor="#53c44c" />
            </linearGradient>
            <radialGradient id="msgBubble" cx="0.4" cy="0.3">
              <stop offset="0" stopColor="#ffffff" />
              <stop offset="1" stopColor="#c6e6c2" />
            </radialGradient>
          </defs>
          <rect width="96" height="96" rx="24" fill="url(#msgGreen)" />
          <ellipse cx="49" cy="45" rx="35" ry="28" fill="url(#msgBubble)" />
          <path d="M27 64 C27 72 26 78 24 80 C30 80 36 76 38 70 Z" fill="#d3ecd0" />
        </AppIcon>
      </DockItem>
      <DockItem>
        <AppIcon>
          <defs>
            <linearGradient id="ftGreen" x1="0" y1="0" x2="0" y2="1">
              <stop offset="0" stopColor="#80ec7c" />
              <stop offset="1" stopColor="#53c44c" />
            </linearGradient>
            <linearGradient id="ftWhite" x1="0" y1="0" x2="0" y2="1">
              <stop offset="0" stopColor="#fff" />
              <stop offset="1" stopColor="#bfe6ba" />
            </linearGradient>
          </defs>
          <rect width="96" height="96" rx="24" fill="url(#ftGreen)" />
          <rect x="15" y="27" width="46" height="43" rx="9" fill="url(#ftWhite)" />
          <path d="M65 45 L83 31 V66 L65 53 Z" fill="url(#ftWhite)" />
        </AppIcon>
        <span className="absolute left-[63px] -top-[12px] flex items-center justify-center w-[46px] h-[46px] rounded-full bg-[#e85a48] text-white text-[25px] font-['Roboto',sans-serif]">4</span>
      </DockItem>
      <DockItem>
        <AppIcon>
          <circle cx="48" cy="48" r="49" fill="#64d36c" />
          <path d="M21 33 C38 25 62 27 77 39" fill="none" stroke="#151515" strokeWidth="10" strokeLinecap="round" />
          <path d="M24 50 C39 44 58 45 72 54" fill="none" stroke="#151515" strokeWidth="8" strokeLinecap="round" />
          <path d="M27 66 C39 62 54 62 66 69" fill="none" stroke="#151515" strokeWidth="6.5" strokeLinecap="round" />
        </AppIcon>
      </DockItem>
      <DockItem>
        <AppIcon>
          <rect width="96" height="96" rx="22" fill="#d8d8d8" />
          <rect x="23" y="12" width="50" height="72" rx="6" fill="#2c2c2c" />
          <rect x="28" y="17" width="40" height="15" rx="2" fill="#636363" />
          {[39, 52].map(y =>
            [32, 48, 64].map((x, i) => <ellipse key={`${x}${y}`} cx={x} cy={y} rx="4.5" ry="5" fill={i === 2 ? '#ef9a32' : '#d6d6d6'} />),
          )}
          <rect x="28" y="63" width="25" height="11" rx="5" fill="#e4e4e4" />
          <ellipse cx="64" cy="68" rx="4.5" ry="6" fill="#ef9a32" />
        </AppIcon>
      </DockItem>
      <DockItem dot>
        <AppIcon>
          <rect width="96" height="96" rx="22" fill="#3b6ff5" />
          <path d="M38 34 L60 50 L34 76 L20 66 Z" fill="#fbcf5f" stroke="#b8862e" strokeWidth="0.8" />
          <path d="M20 66 L34 76 L18 84 Z" fill="#f3e0b0" />
          <path d="M20 76 L26 79 L18 84 Z" fill="#1d1d1d" />
          <path d="M56 22 C62 14 74 16 77 23 L62 58 L44 44 Z" fill="#f4f4f4" />
          {[[64, 24], [72, 26], [60, 32], [68, 35], [55, 41], [63, 45]].map(([x, y]) => (
            <circle key={`${x}${y}`} cx={x} cy={y} r="3" fill="#222" />
          ))}
          <path d="M36 28 L64 62 M40 26 L68 58" stroke="#c8c8c8" strokeWidth="2.2" />
        </AppIcon>
      </DockItem>
      <DockItem dot>
        <AppIcon>
          <rect width="96" height="96" rx="24" fill="#fff" />
          <path d="M13 38 L23 30 L62 64 V82 Z" fill="#3a80cf" />
          <path d="M62 14 V36 L24 66 L13 58 Z" fill="#2a68ad" />
          <path d="M62 14 L81 22 V73 L62 82 Z" fill="#4a96e6" />
        </AppIcon>
      </DockItem>
      <DockItem dot>
        <AppIcon>
          <rect width="96" height="96" rx="22" fill="#2d0000" />
          <text x="48" y="69" textAnchor="middle" fontSize="60" fill="#f79a28" className="font-['Lato',sans-serif]" fontWeight="500">Ai</text>
        </AppIcon>
      </DockItem>
      <span className="ml-[12px] -mt-[2px] w-[2px] h-[110px] bg-[#5c4f89] shrink-0" />
      <svg viewBox="0 0 86 112" className="ml-[15px] -mt-[10px] w-[86px] h-[112px] shrink-0">
        <defs>
          <linearGradient id="trashGlass">
            <stop offset="0" stopColor="#c7c7c9" />
            <stop offset="0.4" stopColor="#ededed" />
            <stop offset="1" stopColor="#cfcfd2" />
          </linearGradient>
        </defs>
        <path d="M1 14 C1 10 85 10 85 14 L75 104 C74 114 14 114 12 104 Z" fill="url(#trashGlass)" />
        <path d="M14 20 L20 2 L30 14 L42 4 L50 14 L62 0 L72 18 L66 28 L20 28 Z" fill="#e8e8e8" stroke="#888" strokeWidth="1" />
        <path d="M26 16 L36 26 H20 Z" fill="#5ab0c8" />
        <path d="M52 12 L62 24 H46 Z" fill="#a05a3c" />
        <ellipse cx="43" cy="15" rx="41" ry="11" fill="none" stroke="#a0a0a0" strokeWidth="2" />
      </svg>
    </div>
  );
}

export default function App() {
  return (
    <div className="relative flex flex-col w-[2880px] h-[1800px] overflow-hidden font-['Lato',sans-serif] bg-[radial-gradient(ellipse_520px_150px_at_100%_10%,#923a60,transparent),radial-gradient(ellipse_900px_120px_at_88%_0%,#54284f,transparent),linear-gradient(90deg,#1b3050,#2a2b56_30%,#3c3f72_70%,#4e4378)]">
      <MenuBar />
      <div className="flex h-[2px] bg-[#4f8fc0]">
        <span className="w-[580px] bg-[#c23a5c]" />
      </div>
      <div className="flex flex-col h-[1588px] bg-[#3d3d3d]">
        <TitleBar />
        <div className="h-[1px] bg-[#3a3a3a]" />
        <div className="flex flex-1 min-h-0">
          <Toolbar />
          <div className="w-[6px] bg-[#3e3e3e] shrink-0" />
          <div className="flex w-[2286px] shrink-0">
            <Canvas />
          </div>
          <div className="w-[8px] bg-[#3e3e3e] shrink-0" />
          <PropertiesPanel />
        </div>
      </div>
      <div className="relative flex justify-center pt-[3px] flex-1">
        <Dock />
        <span className="absolute left-[2457px] top-0 flex items-center justify-center w-[387px] h-[34px] bg-[#c8c8c8] text-[#555] text-[24px]">
          Convert the selected text to paths
        </span>
      </div>
    </div>
  );
}
